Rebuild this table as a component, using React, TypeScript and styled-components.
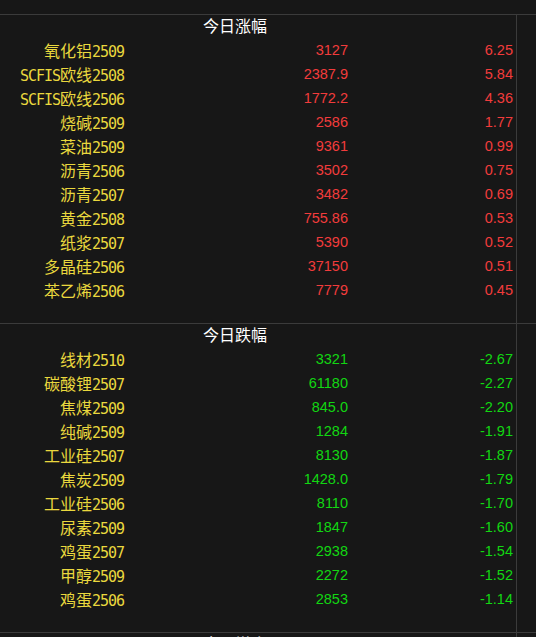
import React, { FC } from "react";
import styled, { createGlobalStyle } from "styled-components";

const colors = {
  bg: "#171717",
  line: "#3b3b3b",
  title: "#ffffff",
  name: "#ead83e",
  up: "#f23c3c",
  down: "#12d612",
};

const GlobalStyle = createGlobalStyle`
  html, body {
    margin: 0;
    padding: 0;
    background: ${colors.bg};
    overflow: hidden;
  }
  body {
    font-family: "Noto Sans CJK SC", "Liberation Sans", sans-serif;
  }
`;

interface IQuote {
  name: string;
  price: string;
  pct: string;
}

const rising: IQuote[] = [
  { name: "氧化铝2509", price: "3127", pct: "6.25" },
  { name: "SCFIS欧线2508", price: "2387.9", pct: "5.84" },
  { name: "SCFIS欧线2506", price: "1772.2", pct: "4.36" },
  { name: "烧碱2509", price: "2586", pct: "1.77" },
  { name: "菜油2509", price: "9361", pct: "0.99" },
  { name: "沥青2506", price: "3502", pct: "0.75" },
  { name: "沥青2507", price: "3482", pct: "0.69" },
  { name: "黄金2508", price: "755.86", pct: "0.53" },
  { name: "纸浆2507", price: "5390", pct: "0.52" },
  { name: "多晶硅2506", price: "37150", pct: "0.51" },
  { name: "苯乙烯2506", price: "7779", pct: "0.45" },
];

const falling: IQuote[] = [
  { name: "线材2510", price: "3321", pct: "-2.67" },
  { name: "碳酸锂2507", price: "61180", pct: "-2.27" },
  { name: "焦煤2509", price: "845.0", pct: "-2.20" },
  { name: "纯碱2509", price: "1284", pct: "-1.91" },
  { name: "工业硅2507", price: "8130", pct: "-1.87" },
  { name: "焦炭2509", price: "1428.0", pct: "-1.79" },
  { name: "工业硅2506", price: "8110", pct: "-1.70" },
  { name: "尿素2509", price: "1847", pct: "-1.60" },
  { name: "鸡蛋2507", price: "2938", pct: "-1.54" },
  { name: "甲醇2509", price: "2272", pct: "-1.52" },
  { name: "鸡蛋2506", price: "2853", pct: "-1.14" },
];

const Page = styled.div`
  padding-top: 14px;
  width: 536px;
`;

const Section = styled.section`
  border-top: 1px solid ${colors.line};
  display: grid;
  grid-template-columns: 517px 1fr;
`;

const Main = styled.div`
  border-right: 1px solid ${colors.line};
  padding-bottom: 20px;
`;

const Header = styled.div`
  height: 24px;
  box-sizing: border-box;
  padding: 0 46px 3px 0;
  display: flex;
  align-items: center;
  justify-content: center;
  color: ${colors.title};
  font-size: 16px;
  line-height: 21px;
`;

const Row = styled.div`
  display: grid;
  grid-template-columns: 124px 224px 165px;
  height: 24px;
  align-items: start;
`;

const Name = styled.div`
  text-align: right;
  color: ${colors.name};
  font-size: 16px;
  line-height: 22px;
  white-space: nowrap;
`;

const Code = styled.span`
  font-family: "DejaVu Sans Mono", "Liberation Mono", monospace;
  font-size: 15px;
  letter-spacing: -1.03px;
`;

const Num = styled.div<{ $tone: "up" | "down" }>`
  text-align: right;
  font-family: "Liberation Sans", Arial, sans-serif;
  font-size: 14.5px;
  line-height: 22px;
  color: ${(p) => (p.$tone === "up" ? colors.up : colors.down)};
`;

const splitName = (name: string) =>
  name
    .split(/([\x00-\x7f]+)/)
    .filter((part) => part.length > 0)
    .map((part, i) =>
      /^[\x00-\x7f]+$/.test(part) ? <Code key={i}>{part}</Code> : <span key={i}>{part}</span>
    );

const QuoteSection: FC<{ title: string; items: IQuote[]; tone: "up" | "down" }> = ({
  title,
  items,
  tone,
}) => (
  <Section>
    <Main>
      <Header>{title}</Header>
      {items.map((q) => (
        <Row key={q.name}>
          <Name>{splitName(q.name)}</Name>
          <Num $tone={tone}>{q.price}</Num>
          <Num $tone={tone}>{q.pct}</Num>
        </Row>
      ))}
    </Main>
    <div />
  </Section>
);

const App: FC = () => (
  <>
    <GlobalStyle />
    <Page>
      <QuoteSection title="今日涨幅" items={rising} tone="up" />
      <QuoteSection title="今日跌幅" items={falling} tone="down" />
      <QuoteSection title="今日增仓" items={[]} tone="up" />
    </Page>
  </>
);

export default App;
